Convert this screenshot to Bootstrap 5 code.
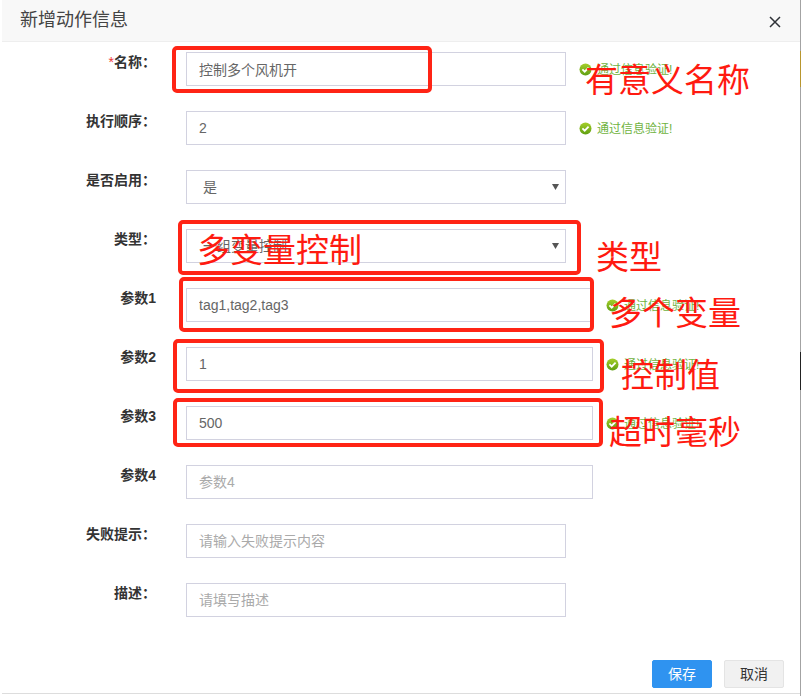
<!DOCTYPE html>
<html lang="zh">
<head>
<meta charset="utf-8">
<title>新增动作信息</title>
<link href="https://cdn.jsdelivr.net/npm/bootstrap@5.3.0/dist/css/bootstrap.min.css" rel="stylesheet">
<style>
html,body{height:696px;overflow:hidden;background:#fff}
body{font-family:"Liberation Sans","Noto Sans CJK SC",sans-serif;font-size:14px;color:#333;position:relative}
.dlg{margin-left:2px;width:798px;height:694px;border-bottom:1px solid #ddd;position:relative}
.dlg-head{height:42px;background:#f8f8f8;border-bottom:1px solid #eee;padding:0 18px;font-size:18px;line-height:41px;color:#444}
.dlg-close{right:17px;top:14px;width:16px;height:16px;padding:0;border:0;background:none;line-height:0}
.dlg-body{padding-top:10px;row-gap:25px}
.frow{height:34px}
.flabel{width:154px;flex:none;text-align:right;font-weight:700;line-height:20px;color:#333}
.flabel i{color:#e33;font-style:normal;font-weight:400}
.ffield{margin-left:30px;flex:none;width:380px}
.ffield.wide{width:407px}
.ffield .form-control,.ffield .form-select{height:34px;border:1px solid #d2d2e0;border-radius:0;font-size:14px;color:#666;padding:0 11px 1px 12px;box-shadow:none}
.ffield .form-select{padding:0 11px 0 16px;background-image:url("data:image/svg+xml,%3Csvg xmlns='http://www.w3.org/2000/svg' width='7' height='6'%3E%3Cpath d='M0 0h7L3.5 6z' fill='%23555'/%3E%3C/svg%3E");background-size:7px 6px;background-position:right 6px center}
.ffield .form-control::placeholder{color:#aaa}
.okmsg{margin-left:13px;padding-top:1px;font-size:12px;color:#6fb33f;gap:5px;white-space:nowrap}
.okmsg svg{flex:none}
.dlg-foot{right:16px;top:660px;gap:12px}
.dlg-foot .btn{width:60px;height:28px;padding:0;font-size:14px;line-height:26px;border-radius:2px}
.btn-save{background:#2f93f0;border:1px solid #2f93f0;color:#fff}
.btn-cancel{background:#f1f1f1;border:1px solid #e4e4e4;color:#333}
.redbox{position:absolute;border:4px solid #ff2415;border-radius:5px;pointer-events:none}
.rb1{left:172px;top:46px;width:260px;height:47px}
.rb2{left:178px;top:220px;width:403px;height:55px}
.rb3{left:179px;top:277px;width:415px;height:55px}
.rb4{left:173px;top:339px;width:431px;height:54px}
.rb5{left:173px;top:398px;width:430px;height:49px}
.redtxt{position:absolute;color:#ff1a10;font-size:33px;line-height:40px;font-family:"Noto Sans CJK SC",sans-serif;white-space:nowrap;font-weight:400}
.rt1{left:585px;top:58px}
.rt2{left:197px;top:228px}
.rt3{left:596px;top:235px}
.rt4{left:609px;top:291px}
.rt5{left:621px;top:353px}
.rt6{left:609px;top:410px}
.edge{position:absolute;right:0;width:1px;background:#a3a3a3}
.e1{top:0;height:51px}
.e4{top:51px;height:36px;background:#b8962e}
.e5{top:87px;height:265px}
.e2{top:352px;height:38px;background:#222}
.e3{top:390px;height:306px}
</style>
</head>
<body>
<div class="dlg">
  <div class="dlg-head">新增动作信息</div>
  <button type="button" class="dlg-close position-absolute" aria-label="关闭"><svg width="16" height="16" viewBox="0 0 16 16"><path d="M3 3l10 10M13 3L3 13" stroke="#2f3238" stroke-width="1.5" fill="none"/></svg></button>
  <svg width="0" height="0" class="position-absolute"><defs><linearGradient id="okg" x1="0" y1="0" x2="0" y2="1"><stop offset="0" stop-color="#a5cf2a"/><stop offset="1" stop-color="#5f9f12"/></linearGradient>
    <symbol id="okic" viewBox="0 0 13 13"><circle cx="6.5" cy="6.5" r="6" fill="url(#okg)"/><path d="M3.4 6.4l2.3 2.3 3.9-4.1" stroke="#fff" stroke-width="1.8" fill="none"/></symbol></defs></svg>
  <form class="dlg-body d-flex flex-column">
    <div class="frow d-flex"><div class="flabel"><i>*</i>名称：</div><div class="ffield"><input class="form-control" value="控制多个风机开"></div>
      <div class="okmsg d-flex align-items-center"><svg width="13" height="13"><use href="#okic"/></svg>通过信息验证!</div></div>
    <div class="frow d-flex"><div class="flabel">执行顺序：</div><div class="ffield"><input class="form-control" value="2"></div>
      <div class="okmsg d-flex align-items-center"><svg width="13" height="13"><use href="#okic"/></svg>通过信息验证!</div></div>
    <div class="frow d-flex"><div class="flabel">是否启用：</div><div class="ffield"><select class="form-select"><option>是</option></select></div></div>
    <div class="frow d-flex"><div class="flabel">类型：</div><div class="ffield"><select class="form-select"><option>一组变量控制</option></select></div></div>
    <div class="frow d-flex"><div class="flabel">参数1</div><div class="ffield wide"><input class="form-control" value="tag1,tag2,tag3"></div>
      <div class="okmsg d-flex align-items-center"><svg width="13" height="13"><use href="#okic"/></svg>通过信息验证!</div></div>
    <div class="frow d-flex"><div class="flabel">参数2</div><div class="ffield wide"><input class="form-control" value="1"></div>
      <div class="okmsg d-flex align-items-center"><svg width="13" height="13"><use href="#okic"/></svg>通过信息验证!</div></div>
    <div class="frow d-flex"><div class="flabel">参数3</div><div class="ffield wide"><input class="form-control" value="500"></div>
      <div class="okmsg d-flex align-items-center"><svg width="13" height="13"><use href="#okic"/></svg>通过信息验证!</div></div>
    <div class="frow d-flex"><div class="flabel">参数4</div><div class="ffield wide"><input class="form-control" placeholder="参数4"></div></div>
    <div class="frow d-flex"><div class="flabel">失败提示：</div><div class="ffield"><input class="form-control" placeholder="请输入失败提示内容"></div></div>
    <div class="frow d-flex"><div class="flabel">描述：</div><div class="ffield"><input class="form-control" placeholder="请填写描述"></div></div>
  </form>
  <div class="dlg-foot position-absolute d-flex"><button type="button" class="btn btn-save">保存</button><button type="button" class="btn btn-cancel">取消</button></div>
</div>
<div class="redbox rb1"></div><div class="redbox rb2"></div><div class="redbox rb3"></div><div class="redbox rb4"></div><div class="redbox rb5"></div>
<div class="redtxt rt1">有意义名称</div><div class="redtxt rt2">多变量控制</div><div class="redtxt rt3">类型</div><div class="redtxt rt4">多个变量</div><div class="redtxt rt5">控制值</div><div class="redtxt rt6">超时毫秒</div>
<div class="edge e1"></div><div class="edge e4"></div><div class="edge e5"></div><div class="edge e2"></div><div class="edge e3"></div>
<script src="https://cdn.jsdelivr.net/npm/bootstrap@5.3.0/dist/js/bootstrap.bundle.min.js"></script>
</body>
</html>
